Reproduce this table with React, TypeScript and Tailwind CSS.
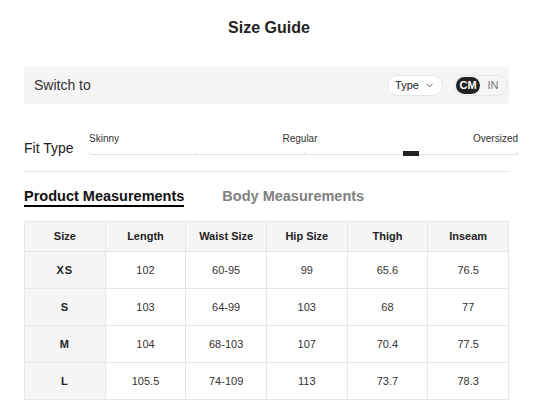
import { ChevronDown } from "lucide-react";

const headers = ["Size", "Length", "Waist Size", "Hip Size", "Thigh", "Inseam"];

const rows = [
  ["XS", "102", "60-95", "99", "65.6", "76.5"],
  ["S", "103", "64-99", "103", "68", "77"],
  ["M", "104", "68-103", "107", "70.4", "77.5"],
  ["L", "105.5", "74-109", "113", "73.7", "78.3"],
];

export default function App() {
  return (
    <div className="min-h-[407px] bg-white px-[24px] font-['Liberation_Sans',Arial,sans-serif] text-[#222]">
      <h1 className="pt-[18px] text-center text-[16px] font-bold leading-[20px] pl-[5px]">Size Guide</h1>

      <div className="mt-[29px] flex h-[37px] items-center justify-between bg-[#f5f5f5] pl-[10px] pr-[1px]">
        <span className="text-[14px] text-[#333]">Switch to</span>
        <div className="flex items-center gap-[11px]">
          <button className="flex h-[21px] w-[56px] items-center justify-center gap-[5px] rounded-full border border-[#e6e6e6] bg-white text-[11px] text-[#222]">
            Type
            <ChevronDown size={11} strokeWidth={1.5} />
          </button>
          <div className="flex h-[21px] w-[54px] items-center rounded-full border border-[#e6e6e6] px-[1px]">
            <span className="flex h-[17px] w-[24px] items-center justify-center rounded-full bg-[#222] text-[11px] font-bold text-white">CM</span>
            <span className="flex-1 text-center text-[11px] text-[#777]">IN</span>
          </div>
        </div>
      </div>

      <div className="mr-[-9px] mt-[29px] flex items-end">
        <span className="w-[65px] text-[14px] font-medium leading-[16px] text-[#222]">Fit Type</span>
        <div className="flex-1">
          <div className="flex justify-between text-[10px] leading-[12px] text-[#333]">
            <span>Skinny</span>
            <span className="pl-[8px]">Regular</span>
            <span>Oversized</span>
          </div>
          <div className="relative mt-[4px] h-[7px]">
            <div className="absolute bottom-[1px] left-0 right-0 h-px bg-[#e3e3e3]" />
            <div className="absolute bottom-[1px] left-0 h-[3px] w-px bg-[#e3e3e3]" />
            <div className="absolute bottom-[1px] left-1/4 h-[3px] w-px bg-[#e3e3e3]" />
            <div className="absolute bottom-[1px] left-1/2 h-[3px] w-px bg-[#e3e3e3]" />
            <div className="absolute bottom-[1px] right-0 h-[3px] w-px bg-[#e3e3e3]" />
            <div className="absolute bottom-0 left-3/4 h-[5px] w-[16px] -translate-x-1/2 bg-[#222]" />
          </div>
        </div>
      </div>

      <div className="mt-[15px] h-px bg-[#e6e6e6]" />

      <div className="mt-[16px] flex items-start gap-[38px] text-[14.5px] font-bold leading-[16px]">
        <div className="border-b-[2px] border-black pb-[1px] text-[#111]">Product Measurements</div>
        <div className="text-[#808080]">Body Measurements</div>
      </div>

      <table className="mt-[14px] w-full table-fixed border-collapse text-center text-[11px] text-[#222]">
        <thead>
          <tr className="h-[30px] bg-[#f5f5f5]">
            {headers.map((h) => (
              <th key={h} className="border border-[#e6e6e6] font-bold">{h}</th>
            ))}
          </tr>
        </thead>
        <tbody>
          {rows.map((r) => (
            <tr key={r[0]} className="h-[37px]">
              {r.map((c, i) => (
                <td
                  key={i}
                  className={i === 0 ? "border border-[#e6e6e6] bg-[#f5f5f5] font-bold tracking-[1px]" : "border border-[#e6e6e6] text-[#333]"}
                >
                  {c}
                </td>
              ))}
            </tr>
          ))}
        </tbody>
      </table>
    </div>
  );
}
